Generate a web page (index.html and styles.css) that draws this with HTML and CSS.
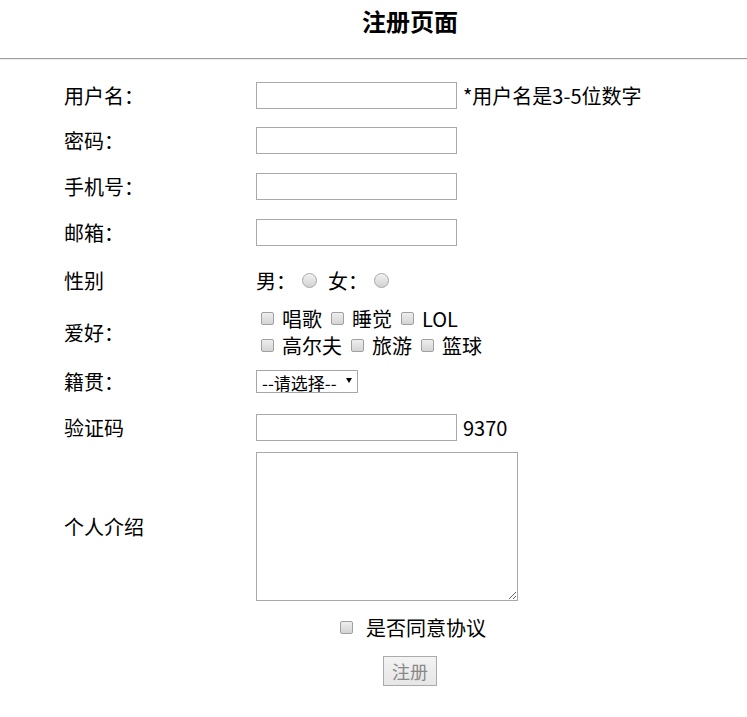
FILE: index.html
```html
<!DOCTYPE html>
<html lang="zh-CN">
<head>
<meta charset="utf-8">
<title>注册页面</title>
<link rel="stylesheet" href="styles.css">
</head>
<body>
<h1 class="title">注册页面</h1>
<hr class="rule">
<form class="form">
  <div class="row row-input row-first">
    <span class="label">用户名：</span>
    <div class="field"><input class="text" type="text"><span class="note">*用户名是3-5位数字</span></div>
  </div>
  <div class="row row-input">
    <span class="label">密码：</span>
    <div class="field"><input class="text" type="password"></div>
  </div>
  <div class="row row-input">
    <span class="label">手机号：</span>
    <div class="field"><input class="text" type="text"></div>
  </div>
  <div class="row row-input">
    <span class="label">邮箱：</span>
    <div class="field"><input class="text" type="text"></div>
  </div>
  <div class="row row-gender">
    <span class="label">性别</span>
    <div class="field gender">
      <span>男：</span><input class="radio radio-m" type="radio" name="sex">
      <span class="female">女：</span><input class="radio radio-f" type="radio" name="sex">
    </div>
  </div>
  <div class="row row-hobby">
    <span class="label">爱好：</span>
    <div class="field hobbies">
      <div class="hobby-line">
        <label class="opt"><input class="check" type="checkbox">唱歌</label>
        <label class="opt"><input class="check" type="checkbox">睡觉</label>
        <label class="opt"><input class="check" type="checkbox">LOL</label>
      </div>
      <div class="hobby-line">
        <label class="opt"><input class="check" type="checkbox">高尔夫</label>
        <label class="opt"><input class="check" type="checkbox">旅游</label>
        <label class="opt"><input class="check" type="checkbox">篮球</label>
      </div>
    </div>
  </div>
  <div class="row row-select">
    <span class="label">籍贯：</span>
    <div class="field"><div class="select-wrap"><select class="select"><option>--请选择--</option><option>北京</option><option>上海</option></select></div></div>
  </div>
  <div class="row row-code">
    <span class="label">验证码</span>
    <div class="field"><input class="text" type="text"><span class="note">9370</span></div>
  </div>
  <div class="row row-intro">
    <span class="label">个人介绍</span>
    <div class="field"><textarea class="area"></textarea></div>
  </div>
  <div class="agree">
    <input class="check check-agree" type="checkbox"><span>是否同意协议</span>
  </div>
  <div class="submit-row">
    <button class="btn" type="button">注册</button>
  </div>
</form>
</body>
</html>
```
FILE: styles.css
```css
html, body {
  margin: 0;
  padding: 0;
  background: #fff;
}
body {
  font-family: "Noto Sans CJK SC", "Liberation Sans", sans-serif;
  font-size: 20px;
  color: #000;
}
.title {
  margin: 0;
  padding: 5px 0 0 73px;
  font-size: 24px;
  line-height: 32px;
  font-weight: bold;
  text-align: center;
}
.rule {
  margin: 21px 0 0;
  height: 0;
  border: 0;
  border-top: 1px solid #9c9c9c;
  border-bottom: 1px solid #eeeeee;
}
.form {
  padding: 13px 0 0 64px;
  margin: 0;
}
.row {
  display: flex;
  align-items: center;
}
.label {
  width: 192px;
  flex: none;
  line-height: 27px;
}
.field {
  display: flex;
  align-items: center;
}
.row-input { padding: 9px 0 10px; }
.row-first { padding-bottom: 9px; }
.row-gender { height: 48px; }
.row-hobby { height: 56px; }
.row-select { height: 42px; }
.row-code { padding: 12px 0 11px; }
.row-intro { height: 149px; }

.text {
  box-sizing: border-box;
  width: 201px;
  height: 27px;
  margin: 0;
  padding: 0 4px;
  border: 1px solid #a9a9a9;
  border-radius: 0;
  font-size: 16px;
  font-family: inherit;
  outline: none;
  background: #fff;
}
.note {
  margin-left: 6px;
  line-height: 27px;
}
.gender span { line-height: 27px; }
.radio {
  appearance: none;
  -webkit-appearance: none;
  box-sizing: border-box;
  width: 15px;
  height: 15px;
  margin: 0;
  border: 1px solid #a8a8a8;
  border-radius: 50%;
  background: linear-gradient(#f2f2f2, #d2d2d2);
}
.radio-m { margin-left: 6px; }
.female { margin-left: 11px; }
.radio-f { margin-left: 6px; }

.hobbies {
  flex-direction: column;
  align-items: flex-start;
}
.hobby-line {
  display: flex;
  align-items: center;
  height: 27px;
}
.opt {
  display: flex;
  align-items: center;
  margin-right: 4px;
}
.check {
  appearance: none;
  -webkit-appearance: none;
  box-sizing: border-box;
  width: 13px;
  height: 13px;
  margin: 0 8px 0 5px;
  border: 1px solid #a0a0a0;
  border-radius: 2px;
  background: linear-gradient(#eeeeee, #d4d4d4);
}

.select-wrap {
  position: relative;
  display: block;
  height: 23px;
}
.select-wrap::after {
  content: "";
  position: absolute;
  left: 90px;
  top: 8px;
  width: 0;
  height: 0;
  border-left: 3.5px solid transparent;
  border-right: 3.5px solid transparent;
  border-top: 5px solid #000;
  pointer-events: none;
}
.select {
  appearance: none;
  -webkit-appearance: none;
  display: block;
  box-sizing: border-box;
  width: 102px;
  height: 23px;
  margin: 0;
  padding: 2px 0 0 5px;
  border: 1px solid #a6a6a6;
  border-radius: 0;
  background: #fff;
  color: #000;
  font-family: inherit;
  font-size: 17px;
  line-height: 19px;
  outline: none;
}

.area {
  display: block;
  box-sizing: border-box;
  width: 262px;
  height: 149px;
  margin: 0;
  border: 1px solid #a9a9a9;
  border-radius: 0;
  font-family: inherit;
  outline: none;
}

.agree {
  display: flex;
  justify-content: center;
  align-items: center;
  height: 52px;
  margin-left: -64px;
  padding-left: 79px;
}
.agree span { line-height: 27px; }
.check-agree { margin: 0 13px 0 0; }

.submit-row {
  display: flex;
  justify-content: center;
  margin-left: -64px;
  padding: 3px 0 0 73px;
}
.btn {
  box-sizing: border-box;
  width: 54px;
  height: 30px;
  margin: 0;
  padding: 0;
  border: 1px solid #ababab;
  border-radius: 0;
  background: linear-gradient(#f3f3f3, #e6e6e6);
  color: #888888;
  font-family: inherit;
  font-size: 18px;
  line-height: 28px;
}
```
